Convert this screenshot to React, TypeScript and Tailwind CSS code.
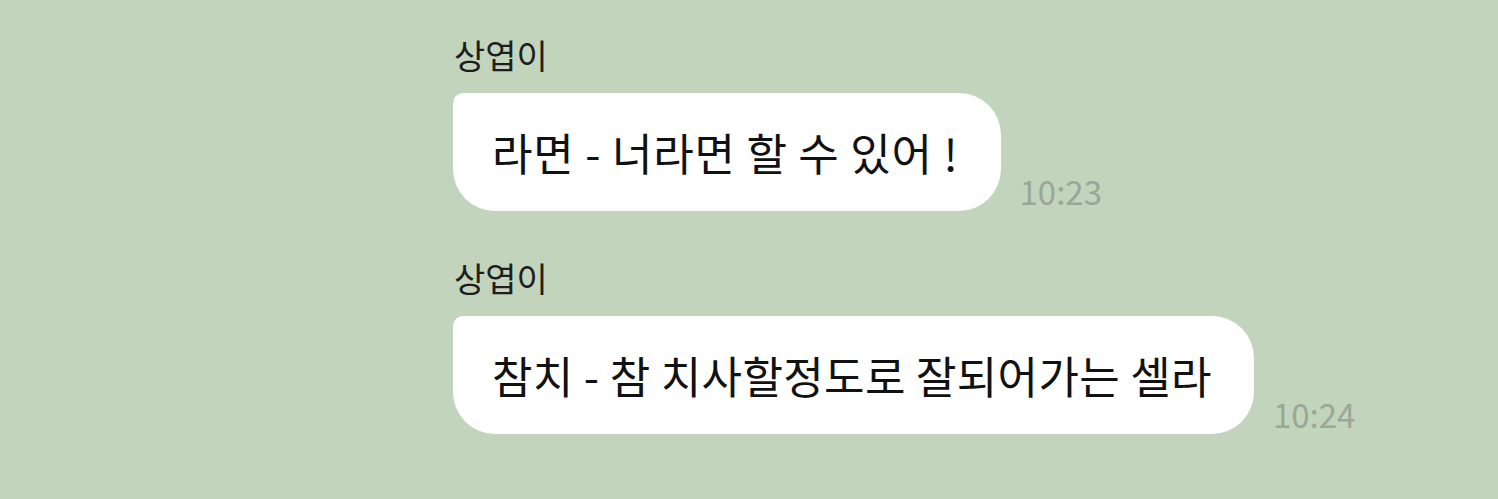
export default function App() {
  const font = { fontFamily: '"Noto Sans CJK KR", "Noto Sans", sans-serif' };
  const Msg = ({ name, text, time, tight }: { name: string; text: string; time: string; tight?: boolean }) => (
    <div className="flex flex-col">
      <div className="text-[34px] leading-[40px] text-[#1e1e1e] pl-[1px]">{name}</div>
      <div className="mt-[18px] flex items-end">
        <div
          className={
            "bg-white h-[118px] flex items-center pl-[39px] pr-[42px] rounded-tl-[10px] rounded-tr-[42px] rounded-br-[42px] rounded-bl-[42px] text-[44px] leading-[52px] text-[#111] whitespace-nowrap " +
            (tight ? "tracking-[0.35px]" : "tracking-[0.8px]")
          }
        >
          {text}
        </div>
        <div className="ml-[19px] mb-[3px] text-[33px] leading-[33px] text-[#9ba699]">{time}</div>
      </div>
    </div>
  );
  return (
    <div className="w-[1498px] h-[499px] bg-[#c2d4bc] pl-[453px] pt-[35px] flex flex-col gap-[47px] overflow-hidden" style={font}>
      <Msg name="상엽이" text="라면 - 너라면 할 수 있어 !" time="10:23" />
      <Msg name="상엽이" text="참치 - 참 치사할정도로 잘되어가는 셀라" time="10:24" tight />
    </div>
  );
}
